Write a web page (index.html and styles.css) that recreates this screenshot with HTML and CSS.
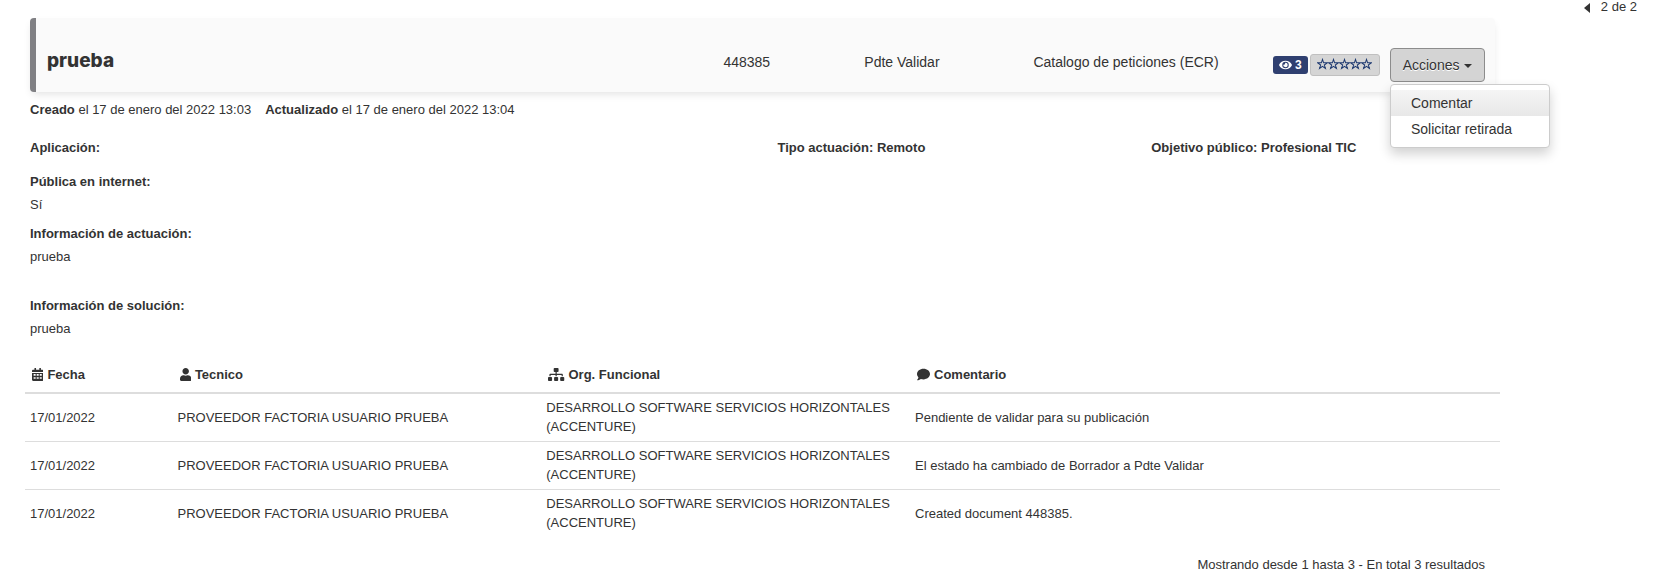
FILE: index.html
```html
<!DOCTYPE html>
<html lang="es">
<head>
    <meta charset="UTF-8">
    <meta name="viewport" content="width=device-width, initial-scale=1.0">
    <title>prueba - 448385</title>
    <link rel="stylesheet" href="styles.css">
</head>
<body>
    <!-- Iconos compartidos -->
    <svg class="sprite" aria-hidden="true">
        <symbol id="star" viewBox="0 0 24 24">
            <path d="M12 2l2.400 7.500H22.500l-6.600 4.600 2.500 7.700L12 17.200l-6.400 4.600 2.500-7.700-6.600-4.600h8.100z" fill="none" stroke="currentColor" stroke-width="2.200"/>
        </symbol>
    </svg>

    <div class="page">
        <main class="ticket">
            <header class="ticket-header">
                <h1>prueba</h1>
                <span>448385</span>
                <span>Pdte Validar</span>
                <span>Catalogo de peticiones (ECR)</span>
                <div class="badges">
                    <span class="views">
                        <svg class="icon-eye" viewBox="0 0 576 512"><path fill="currentColor" d="M572.5 241.400C518.300 135.600 410.900 64 288 64S57.700 135.600 3.500 241.400a32.400 32.400 0 0 0 0 29.200C57.700 376.400 165.100 448 288 448s230.300-71.600 284.500-177.400a32.400 32.400 0 0 0 0-29.200zM288 400a144 144 0 1 1 144-144 143.900 143.900 0 0 1-144 144zm0-240a95.300 95.300 0 0 0-25.300 3.800 47.900 47.900 0 0 1-66.900 66.900A95.800 95.800 0 1 0 288 160z"/></svg>
                        3
                    </span>
                    <button class="rating" type="button" aria-label="Valorar">
                        <svg><use href="#star"/></svg>
                        <svg><use href="#star"/></svg>
                        <svg><use href="#star"/></svg>
                        <svg><use href="#star"/></svg>
                        <svg><use href="#star"/></svg>
                    </button>
                </div>
                <div class="dropdown">
                    <button class="btn-actions" type="button" aria-haspopup="true" aria-expanded="true">Acciones <span class="caret"></span></button>
                    <ul class="dropdown-menu">
                        <li><a class="active" href="#comentar">Comentar</a></li>
                        <li><a href="#retirada">Solicitar retirada</a></li>
                    </ul>
                </div>
            </header>

            <section class="details">
                <p class="dates">
                    <span><b>Creado</b> el 17 de enero del 2022 13:03</span>
                    <span><b>Actualizado</b> el 17 de enero del 2022 13:04</span>
                </p>
                <div class="summary">
                    <b>Aplicación:</b>
                    <b>Tipo actuación: Remoto</b>
                    <b>Objetivo público: Profesional TIC</b>
                </div>
                <dl class="info">
                    <dt>Pública en internet:</dt>
                    <dd>Sí</dd>
                    <dt>Información de actuación:</dt>
                    <dd class="rich-text">prueba</dd>
                    <dt>Información de solución:</dt>
                    <dd>prueba</dd>
                </dl>
            </section>

            <table class="history">
                <thead>
                    <tr>
                        <th class="col-date"><svg class="icon" viewBox="0 0 448 512"><path fill="currentColor" fill-rule="evenodd" d="M0 464c0 26.500 21.500 48 48 48h352c26.500 0 48-21.500 48-48V192H0zM64 240h80v64H64zm120 0h80v64h-80zm120 0h80v64h-80zM64 360h80v64H64zm120 0h80v64h-80zm120 0h80v64h-80zM400 64h-48V16c0-8.800-7.200-16-16-16h-32c-8.800 0-16 7.200-16 16v48H160V16c0-8.800-7.200-16-16-16h-32c-8.800 0-16 7.200-16 16v48H48C21.500 64 0 85.500 0 112v48h448v-48c0-26.500-21.500-48-48-48z"/></svg>Fecha</th>
                        <th class="col-user"><svg class="icon" viewBox="0 0 448 512"><path fill="currentColor" d="M224 256c70.700 0 128-57.300 128-128S294.700 0 224 0 96 57.300 96 128s57.300 128 128 128zm89.600 32h-16.700c-22.200 10.200-46.900 16-72.900 16s-50.600-5.800-72.900-16h-16.700C60.200 288 0 348.200 0 422.400V464c0 26.500 21.500 48 48 48h352c26.500 0 48-21.500 48-48v-41.600c0-74.200-60.200-134.400-134.400-134.400z"/></svg>Tecnico</th>
                        <th class="col-org"><svg class="icon" viewBox="0 0 640 512"><path fill="currentColor" d="M128 352H32c-17.700 0-32 14.300-32 32v96c0 17.700 14.300 32 32 32h96c17.700 0 32-14.300 32-32v-96c0-17.700-14.300-32-32-32zm-24-80h192v48h48v-48h192v48h48v-57.600c0-21.200-17.200-38.400-38.400-38.400H344v-64h40c17.700 0 32-14.300 32-32V32c0-17.700-14.300-32-32-32H256c-17.700 0-32 14.300-32 32v96c0 17.700 14.300 32 32 32h40v64H94.400C73.200 224 56 241.200 56 262.400V320h48zm264 80h-96c-17.700 0-32 14.300-32 32v96c0 17.700 14.300 32 32 32h96c17.700 0 32-14.300 32-32v-96c0-17.700-14.300-32-32-32zm240 0h-96c-17.700 0-32 14.300-32 32v96c0 17.700 14.300 32 32 32h96c17.700 0 32-14.300 32-32v-96c0-17.700-14.300-32-32-32z"/></svg>Org. Funcional</th>
                        <th><svg class="icon" viewBox="0 0 512 512"><path fill="currentColor" d="M256 32C114.600 32 0 125.100 0 240c0 49.600 21.400 95 57 130.700C44.500 421.100 2.700 466 2.200 466.500c-2.200 2.300-2.800 5.700-1.500 8.700S4.800 480 8 480c66.300 0 116-31.800 140.600-51.400 32.700 12.300 69 19.400 107.400 19.400 141.400 0 256-93.100 256-208S397.400 32 256 32z"/></svg>Comentario</th>
                    </tr>
                </thead>
                <tbody>
                    <tr>
                        <td>17/01/2022</td>
                        <td>PROVEEDOR FACTORIA USUARIO PRUEBA</td>
                        <td>DESARROLLO SOFTWARE SERVICIOS HORIZONTALES (ACCENTURE)</td>
                        <td>Pendiente de validar para su publicación</td>
                    </tr>
                    <tr>
                        <td>17/01/2022</td>
                        <td>PROVEEDOR FACTORIA USUARIO PRUEBA</td>
                        <td>DESARROLLO SOFTWARE SERVICIOS HORIZONTALES (ACCENTURE)</td>
                        <td>El estado ha cambiado de Borrador a Pdte Validar</td>
                    </tr>
                    <tr>
                        <td>17/01/2022</td>
                        <td>PROVEEDOR FACTORIA USUARIO PRUEBA</td>
                        <td>DESARROLLO SOFTWARE SERVICIOS HORIZONTALES (ACCENTURE)</td>
                        <td>Created document 448385.</td>
                    </tr>
                </tbody>
            </table>
            <p class="total">Mostrando desde 1 hasta 3 - En total 3 resultados</p>
        </main>

        <nav class="pager">
            <a href="#anterior" aria-label="Anterior"><svg viewBox="0 0 6 12"><path fill="currentColor" d="M6 1v10L0 6z"/></svg></a>
            <span>2 de 2</span>
        </nav>
    </div>
</body>
</html>
```

FILE: styles.css
```css
* {
    margin: 0;
    padding: 0;
    box-sizing: border-box;
}

body {
    background-color: #fff;
    color: #333;
    font-family: Arial, "Liberation Sans", sans-serif;
    font-size: 13px;
    line-height: 19px;
}

button {
    font-family: inherit;
    color: inherit;
    cursor: pointer;
}

.sprite {
    display: none;
}

.page {
    display: grid;
    grid-template-columns: 1fr 137px;
    padding: 0 21px 0 25px;
}

.ticket {
    padding-top: 18px;
}

/* Cabecera */
.ticket-header {
    display: grid;
    grid-template-columns: 48fr 10fr 12fr 17fr 117px 95px;
    margin: 0 5px;
    padding: 30px 10px 10px 11px;
    font-size: 14px;
    line-height: 28px;
    background-color: #fafafa;
    border-left: 6px solid #808084;
    border-radius: 4px;
    box-shadow: 0 4px 8px -2px rgba(0, 0, 0, 0.12);
}

.ticket-header h1 {
    font-family: Inter, Arial, sans-serif;
    font-size: 19px;
    font-weight: 800;
    line-height: 26px;
}

.badges {
    display: flex;
    align-items: center;
    gap: 2px;
}

.views {
    display: flex;
    align-items: center;
    gap: 3px;
    height: 18px;
    padding: 0 6px;
    color: #fff;
    font-size: 12px;
    font-weight: bold;
    background-color: #2f3f70;
    border-radius: 3px;
}

.icon-eye {
    width: 13px;
    height: 12px;
}

.rating {
    display: flex;
    padding: 3px 7px 5px 6px;
    color: #1c3870;
    background-color: #d5d5d5;
    border: 1px solid #c0c0c0;
    border-radius: 3px;
}

.rating svg {
    width: 11px;
    height: 12px;
    overflow: visible;
}

.dropdown {
    position: relative;
}

.btn-actions {
    display: block;
    width: 100%;
    height: 34px;
    font-size: 14px;
    background-color: #d4d4d4;
    border: 1px solid #8c8c8c;
    border-radius: 4px;
    text-shadow: 0 1px 0 #fff;
}

.caret {
    display: inline-block;
    margin-left: 1px;
    vertical-align: middle;
    border-top: 4px solid;
    border-left: 4px solid transparent;
    border-right: 4px solid transparent;
}

.dropdown-menu {
    position: absolute;
    top: 100%;
    left: 0;
    z-index: 10;
    width: 160px;
    margin-top: 2px;
    padding: 5px 0;
    list-style: none;
    background-color: #fff;
    border: 1px solid #ccc;
    border-radius: 4px;
    box-shadow: 0 6px 12px rgba(0, 0, 0, 0.18);
}

.dropdown-menu a {
    display: block;
    padding: 3px 20px;
    color: #333;
    line-height: 20px;
    text-decoration: none;
}

.dropdown-menu a.active {
    background-image: linear-gradient(#f5f5f5, #e8e8e8);
}

/* Detalle de la peticion */
.details {
    padding: 8px 5px 17px;
}

.dates {
    display: flex;
    gap: 14px;
}

.summary {
    display: grid;
    grid-template-columns: 2fr 1fr 1fr;
    margin: 19px -30px 15px 0;
}

.info dt {
    margin-bottom: 4px;
    font-weight: bold;
}

.info dd {
    margin-bottom: 10px;
}

.info .rich-text {
    margin-bottom: 30px;
}

/* Historial */
.history {
    width: 100%;
    table-layout: fixed;
    border-collapse: collapse;
}

.history th {
    padding: 0 5px 8px;
    text-align: left;
    border-bottom: 2px solid #ddd;
}

.history td {
    padding: 4px 5px 5px;
    vertical-align: middle;
}

.history tbody tr + tr td {
    border-top: 1px solid #ddd;
}

.col-date {
    width: 10%;
}

.col-user,
.col-org {
    width: 25%;
}

.icon {
    height: 13px;
    margin: 0 4px 0 2px;
    vertical-align: -2px;
}

.total {
    margin-top: 18px;
    padding-right: 15px;
    text-align: right;
}

.pager {
    display: flex;
    justify-content: flex-end;
    gap: 11px;
    margin-top: -3px;
}

.pager a {
    color: #333;
}

.pager svg {
    width: 6px;
    height: 12px;
    vertical-align: middle;
}
```
